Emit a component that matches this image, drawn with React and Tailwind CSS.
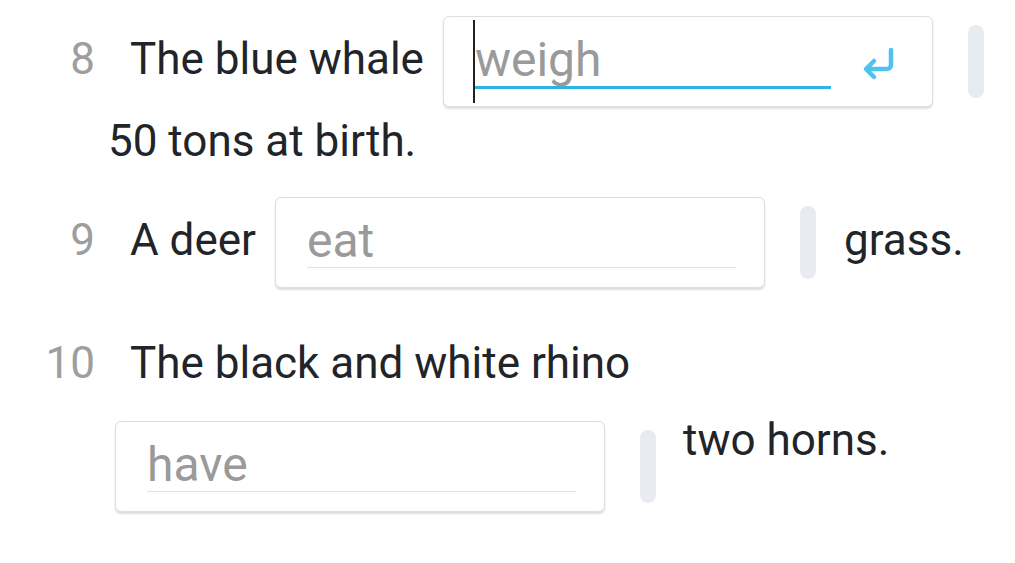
import React from "react";

const Num = ({ children, className = "" }) => (
  <span className={"ml-[-75px] mr-[35px] w-[60px] text-right text-[#9e9e9e] leading-[56px] " + className}>
    {children}
  </span>
);

const Pill = () => <div className="h-[73px] w-4 shrink-0 rounded-full bg-[#e8ebef]" />;

const EnterIcon = () => (
  <svg width="36" height="36" viewBox="0 0 36 36" fill="none" stroke="#4fc3f0" strokeWidth="4.5" strokeLinecap="round" strokeLinejoin="round">
    <path d="M30 3v15a4 4 0 0 1-4 4H6" />
    <path d="M13 14l-8 8 8 8" />
  </svg>
);

const Blank = ({ word, active, className }) => (
  <div
    className={
      "relative h-[91px] w-[490px] shrink-0 rounded-[6px] border border-[#dedede] bg-white shadow-[0_2px_2px_rgba(0,0,0,0.13)] " +
      className
    }
  >
    {active && <div className="absolute left-[29px] top-[3px] h-[83px] w-[2px] bg-[#222]" />}
    <div className="flex items-start pl-[31px] pt-[17px]">
      {active ? (
        <>
          <div className="w-[356px] border-b-[3px] border-[#2cb5e2] text-[48px] leading-[52px] text-[#9a9a9a]">
            {word}
          </div>
          <div className="ml-[30px] mt-[13px]">
            <EnterIcon />
          </div>
        </>
      ) : (
        <div className="w-[429px] border-b border-[#e2e2e2] text-[48px] leading-[52px] text-[#9a9a9a]">
          {word}
        </div>
      )}
    </div>
  </div>
);

export default function App() {
  return (
    <div className="h-[563px] w-[1015px] overflow-hidden bg-white font-['Roboto'] text-[44px] text-[#212429]">
      <div className="flex flex-wrap items-center gap-y-[6px] pl-[110px] pt-[16px]">
        <Num className="-mt-[6px]">8</Num>
        <span className="-mt-[6px] leading-[56px]">The blue whale</span>
        <Blank word="weigh" active className="ml-[19px]" />
        <div className="ml-[35px]">
          <Pill />
        </div>
        <span className="-ml-[2px] leading-[56px]">50 tons at birth.</span>
      </div>

      <div className="mt-[28px] flex flex-wrap items-center pl-[110px]">
        <Num className="-mt-[5px]">9</Num>
        <span className="-mt-[5px] leading-[56px]">A deer</span>
        <Blank word="eat" className="ml-[19px]" />
        <div className="ml-[35px]">
          <Pill />
        </div>
        <span className="-mt-[5px] ml-[28px] leading-[56px]">grass.</span>
      </div>

      <div className="mt-[47px] flex flex-wrap items-center gap-y-[30px] pl-[110px]">
        <Num>10</Num>
        <span className="leading-[56px]">The black and white rhino</span>
        <Blank word="have" className="ml-[5px]" />
        <div className="ml-[35px]">
          <Pill />
        </div>
        <span className="-mt-[9px] ml-[27px] self-start leading-[56px]">two horns.</span>
      </div>
    </div>
  );
}
